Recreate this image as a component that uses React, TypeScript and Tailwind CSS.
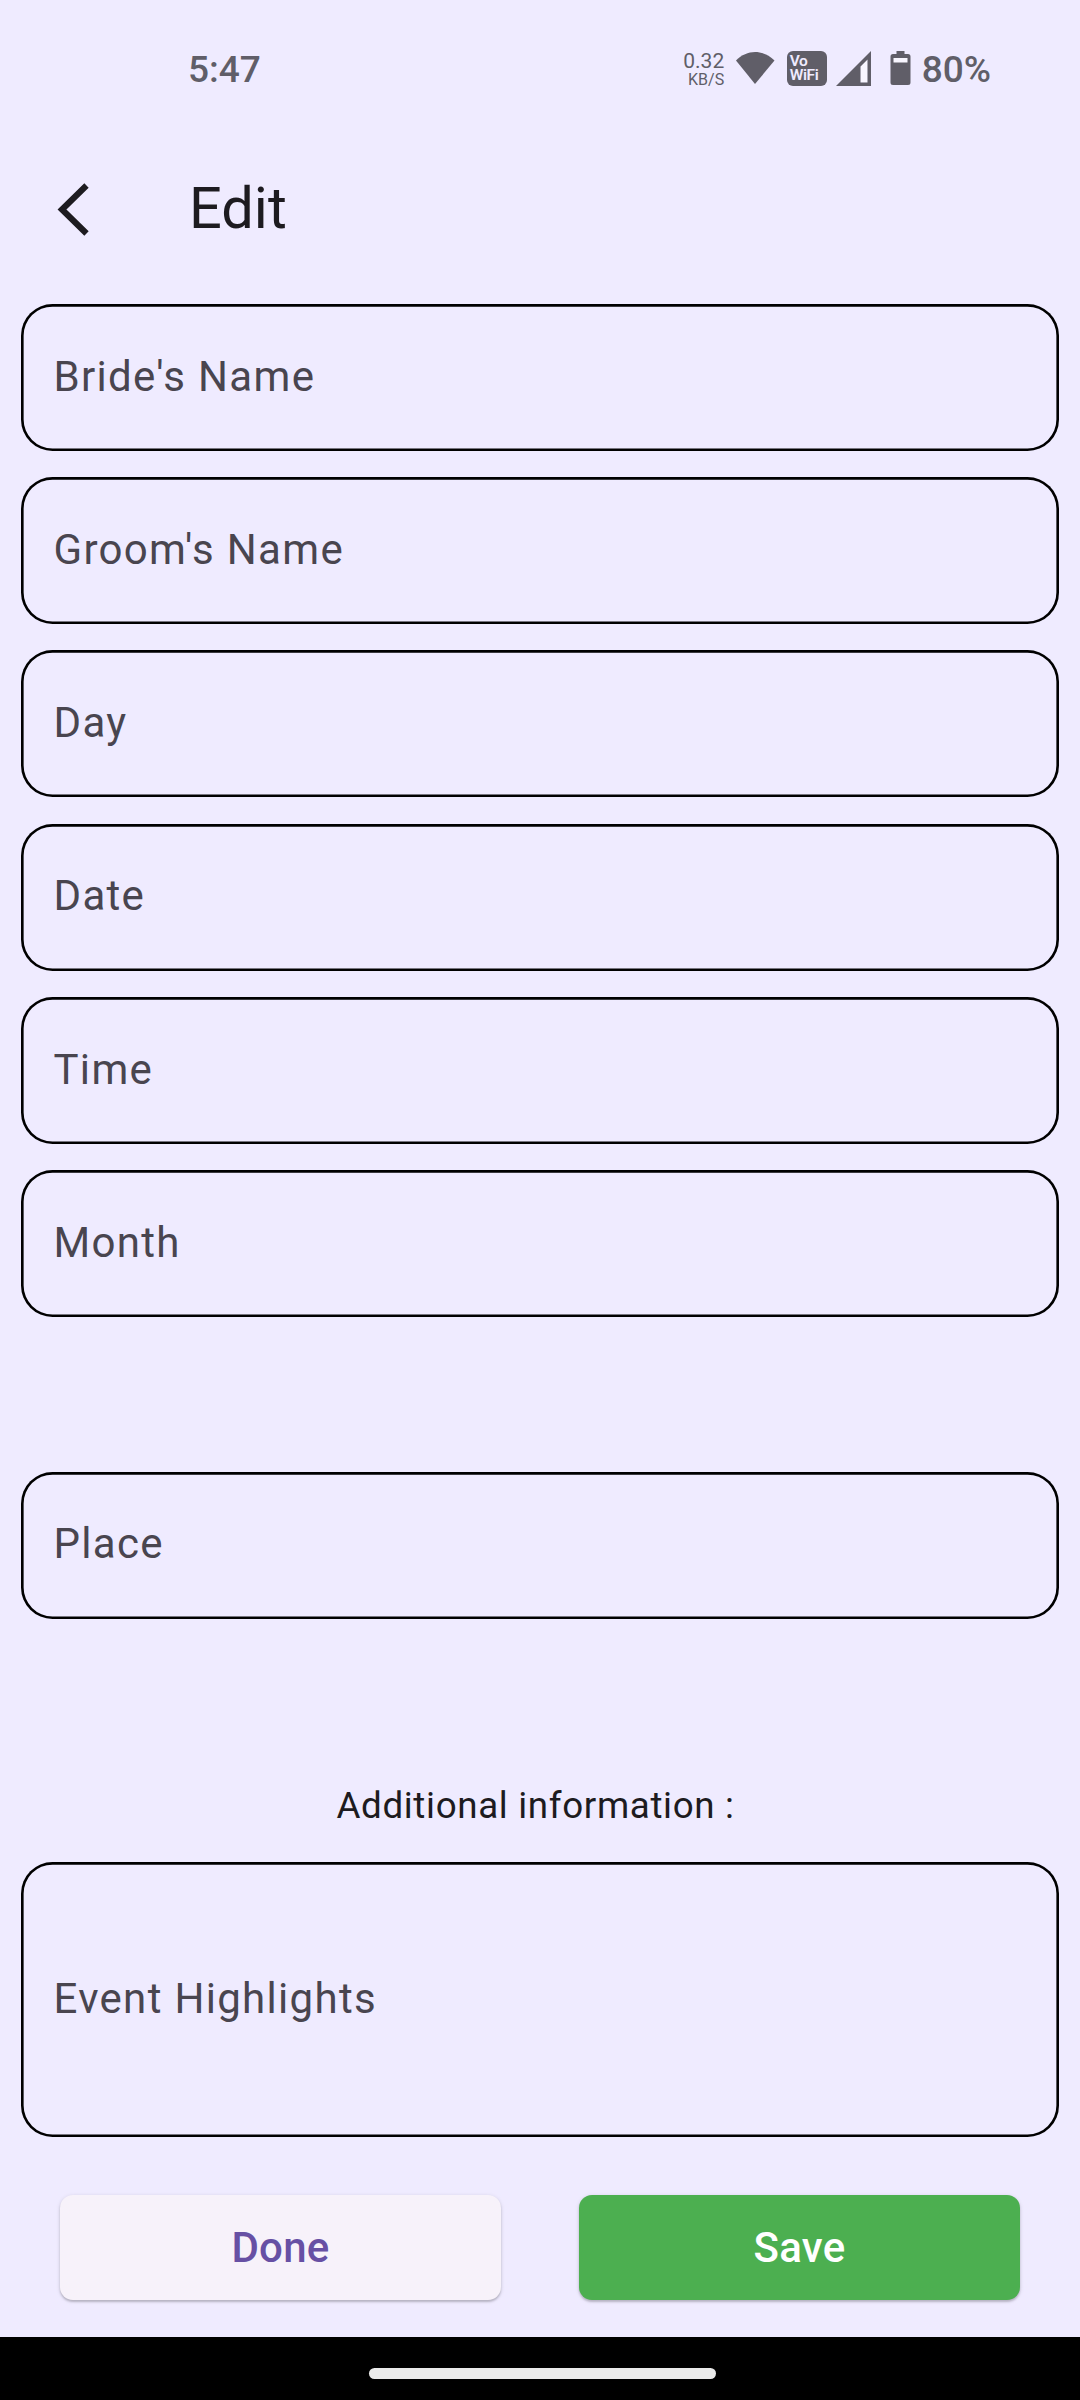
import React from "react";

const firstFields = ["Bride's Name", "Groom's Name", "Day", "Date", "Time", "Month"];

function Field({ label, tall = false }: { label: string; tall?: boolean }) {
  return (
    <div
      className={`flex items-center rounded-[31.5px] pb-[2.6px] pl-[32.5px] text-[42px] leading-[63px] tracking-[1.3125px] text-[#49454f] shadow-[inset_0_0_0_2.625px_#000] ${
        tall ? "h-[275.2px]" : "h-[147px]"
      }`}
    >
      {label}
    </div>
  );
}

function StatusBar() {
  return (
    <header className="flex h-[136px] items-center justify-between pl-[188px] pr-[89px] font-medium text-[#605e68]">
      <span className="pt-[3px] text-[37px] leading-[44px]">5:47</span>
      <div className="flex h-[44px] items-center">
        <div className="flex flex-col items-end pt-[3px] font-normal">
          <span className="text-[21px] leading-[20px]">0.32</span>
          <span className="text-[16px] leading-[18px]">KB/S</span>
        </div>
        <svg className="ml-[11px]" width="40" height="34" viewBox="0 0 40 34" fill="currentColor">
          <path d="M1 9.5C12-2 28-2 39.500 9.500L20 33z" />
        </svg>
        <div className="ml-[11.5px] flex h-[35px] w-[40px] flex-col justify-center rounded-[6px] bg-[#605e68] pl-[3px] text-[15.5px] font-semibold leading-[14.5px] tracking-[-0.4px] text-[#efebff]">
          <span>Vo</span>
          <span>WiFi</span>
        </div>
        <svg className="ml-[9px]" width="35" height="35" viewBox="0 0 35 35" fill="currentColor">
          <path d="M24.500 15.500V31.500H31.500V8.500z" fill="#f8f6ff" />
          <path d="M0 35L35 0V35zM24.500 15.500V31.500H31.500V8.500z" fillRule="evenodd" />
        </svg>
        <svg className="ml-[19px]" width="21" height="34" viewBox="0 0 21 34" fill="currentColor">
          <path d="M6.500 0H14.500V3H18Q20.500 3 20.500 5.500V31.500Q20.500 34 18 34H3Q.5 34 .5 31.500V5.500Q.5 3 3 3H6.500z" />
          <path d="M3.500 7V11.500H17.500V7z" fill="#f8f6ff" />
        </svg>
        <span className="ml-[11px] pt-[3px] text-[37px] leading-[44px]">80%</span>
      </div>
    </header>
  );
}

export default function App() {
  return (
    <div className="flex h-[2400px] w-[1080px] flex-col overflow-hidden bg-[#efebff] font-['Roboto',sans-serif]">
      <StatusBar />
      <div className="flex h-[147px] items-center pl-[57px]">
        <svg width="34" height="54" viewBox="0 0 34 54" fill="none" stroke="#1d1b20" strokeWidth="6.200">
          <path d="M29.500 2.500L5 26.500L29.500 50.500" />
        </svg>
        <h1 className="ml-[98px] pb-[4px] text-[57.750px] leading-[74px] text-[#1d1b20]">Edit</h1>
      </div>
      <main className="flex flex-col px-[21px] pt-[21px]">
        <div className="flex flex-col gap-[26.24px]">
          {firstFields.map((label) => (
            <Field key={label} label={label} />
          ))}
        </div>
        <div className="mt-[154.4px]">
          <Field label="Place" />
        </div>
        <p className="mt-[160px] pr-[9px] text-center text-[36.750px] leading-[53px] tracking-[0.656px] text-[#1d1b20]">
          Additional information :
        </p>
        <div className="mt-[30.6px]">
          <Field label="Event Highlights" tall />
        </div>
        <div className="mt-[57.9px] flex justify-between px-[39px] text-[42px] font-medium tracking-[0.2625px]">
          <button className="h-[105px] w-[441px] rounded-[13px] bg-[#f7f2fa] text-[#6750a4] shadow-[0_2px_2px_rgba(0,0,0,0.17),0_1px_4px_rgba(0,0,0,0.13)]">
            Done
          </button>
          <button className="h-[105px] w-[441px] rounded-[13px] bg-[#4caf50] text-white shadow-[0_2px_2px_rgba(0,0,0,0.17),0_1px_4px_rgba(0,0,0,0.13)]">
            Save
          </button>
        </div>
      </main>
      <footer className="mt-auto flex h-[63px] justify-center bg-black pl-[5px] pt-[31px]">
        <div className="h-[11px] w-[347px] rounded-full bg-[#eaeaea]" />
      </footer>
    </div>
  );
}
